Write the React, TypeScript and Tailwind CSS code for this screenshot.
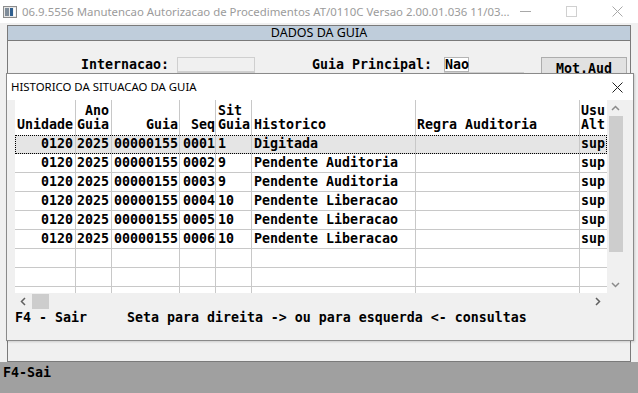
import React from 'react';

const mono = { fontFamily: '"DejaVu Sans Mono", "Liberation Mono", monospace' };
const ui = { fontFamily: '"Noto Sans", "Open Sans", Arial, sans-serif' };

interface Row {
  unidade: string;
  ano: string;
  guia: string;
  seq: string;
  sit: string;
  historico: string;
  regra: string;
  usu: string;
}

const rows: Row[] = [
  { unidade: '0120', ano: '2025', guia: '00000155', seq: '0001', sit: '1', historico: 'Digitada', regra: '', usu: 'sup' },
  { unidade: '0120', ano: '2025', guia: '00000155', seq: '0002', sit: '9', historico: 'Pendente Auditoria', regra: '', usu: 'sup' },
  { unidade: '0120', ano: '2025', guia: '00000155', seq: '0003', sit: '9', historico: 'Pendente Auditoria', regra: '', usu: 'sup' },
  { unidade: '0120', ano: '2025', guia: '00000155', seq: '0004', sit: '10', historico: 'Pendente Liberacao', regra: '', usu: 'sup' },
  { unidade: '0120', ano: '2025', guia: '00000155', seq: '0005', sit: '10', historico: 'Pendente Liberacao', regra: '', usu: 'sup' },
  { unidade: '0120', ano: '2025', guia: '00000155', seq: '0006', sit: '10', historico: 'Pendente Liberacao', regra: '', usu: 'sup' },
];

// column cells: width includes the 1px right grid line
const cell = 'h-full flex items-center border-r border-[#c8c8c8] shrink-0 whitespace-pre';

function GridRow({ r, selected }: { r?: Row; selected?: boolean }) {
  return (
    <div
      className={`flex h-[19px] border-b border-[#c8c8c8] ${
        selected ? 'bg-[#e5e5e5] outline-1 outline-dotted outline-black -outline-offset-1' : ''
      }`}
    >
      <div className={`${cell} w-[61px] justify-end pr-[2px]`}>{r?.unidade}</div>
      <div className={`${cell} w-[36px] justify-end pr-[2px]`}>{r?.ano}</div>
      <div className={`${cell} w-[68px] justify-end pr-[1px]`}>{r?.guia}</div>
      <div className={`${cell} w-[36px] justify-end`}>{r?.seq}</div>
      <div className={`${cell} w-[36px] pl-[2px]`}>{r?.sit}</div>
      <div className={`${cell} w-[164px] pl-[2px]`}>{r?.historico}</div>
      <div className={`${cell} w-[164px] pl-[1px]`}>{r?.regra}</div>
      <div className={`${cell} w-[40px] pl-[1px]`}>{r?.usu}</div>
    </div>
  );
}

export default function App() {
  return (
    <div className="w-[638px] h-[393px] relative overflow-hidden bg-[#f0f0f0] flex flex-col text-black">
      {/* Window title bar (inactive) */}
      <div className="h-[23px] bg-white flex items-center shrink-0" style={ui}>
        <svg width="14" height="12" viewBox="0 0 14 12" className="ml-[3px] shrink-0">
          <rect x="0.5" y="0.5" width="13" height="11" fill="#e6e6e6" stroke="#8c8c8c" />
          <rect x="2" y="2" width="4" height="8" fill="#7f8c99" />
          <rect x="7" y="2" width="3" height="8" fill="#2f5f8f" />
          <rect x="10.5" y="2" width="2" height="8" fill="#ffffff" />
        </svg>
        <span className="ml-[5px] text-[11.4px] text-[#9b9b9b] whitespace-nowrap">
          06.9.5556 Manutencao Autorizacao de Procedimentos AT/0110C Versao 2.00.01.036 11/03...
        </span>
        <div className="ml-auto flex items-center text-[#a8a8a8] shrink-0">
          <svg width="11" height="11" viewBox="0 0 11 11" className="mr-[35px]">
            <line x1="0" y1="5.5" x2="11" y2="5.5" stroke="currentColor" />
          </svg>
          <svg width="11" height="11" viewBox="0 0 11 11" className="mr-[35px]">
            <rect x="0.5" y="0.5" width="10" height="10" fill="none" stroke="#d0d0d0" />
          </svg>
          <svg width="11" height="11" viewBox="0 0 11 11" className="mr-[15px]">
            <path d="M0.5 0.5 L10.5 10.5 M10.5 0.5 L0.5 10.5" stroke="currentColor" />
          </svg>
        </div>
      </div>

      {/* Main form */}
      <div className="flex-1 pt-[2px] pl-[7px]">
        <div className="w-[624px] h-full border border-[#7a7a7a] flex flex-col" style={mono}>
          <div
            className="h-[15px] bg-[#bfcddb] border-b border-[#7a7a7a] flex items-center justify-center text-[12.5px] leading-none"
            style={ui}
          >
            DADOS DA GUIA
          </div>

          <div className="pt-[16px] text-[13.29px] font-bold leading-none">
            <div className="flex items-start h-[15px]">
              <div className="w-[161px] h-[15px] flex items-center justify-end whitespace-pre">Internacao:</div>
              <div className="ml-[8px] w-[78px] h-[15px] border border-[#cfcfcf] bg-[#f0f0f0]" />
              <div className="ml-[57px] w-[124px] h-[15px] flex items-center whitespace-pre">Guia Principal:</div>
              <div className="ml-[8px] w-[25px] h-[15px] border border-[#b4b4b4] bg-white flex items-center">Nao</div>
              <div className="ml-[72px] w-[86px] h-[23px] border border-[#adadad] bg-[#e1e1e1] flex items-center justify-center">
                <span className="underline underline-offset-2">M</span>ot.Aud
              </div>
            </div>
            {/* second row of fields, hidden behind the dialog */}
            <div className="flex items-start h-[2px] overflow-hidden">
              <div className="ml-[169px] w-[78px] h-[15px] border border-[#cfcfcf] bg-white" />
              <div className="ml-[189px] w-[80px] h-[15px] border border-[#cfcfcf] bg-white" />
            </div>
          </div>
        </div>
      </div>

      {/* Status bar */}
      <div className="h-[31px] bg-[#a0a0a0] shrink-0 pl-[3px] pt-[3px] text-[13.29px] font-bold leading-[15px]" style={mono}>
        F4-Sai
      </div>

      {/* Modal dialog over the form */}
      <div className="absolute left-[6px] top-[73px] w-[628px] h-[268px] border border-[#8a8a8a] bg-[#f0f0f0] flex flex-col shadow-[1px_1px_2px_rgba(0,0,0,0.15)]">
        <div className="h-[26px] bg-white flex items-center pl-[4px] pr-[10px] shrink-0" style={ui}>
          <span className="text-[11.4px]">HISTORICO DA SITUACAO DA GUIA</span>
          <svg width="11" height="11" viewBox="0 0 11 11" className="ml-auto">
            <path d="M0.5 0.5 L10.5 10.5 M10.5 0.5 L0.5 10.5" stroke="#222" />
          </svg>
        </div>

        <div className="pl-[8px] text-[13.29px] font-bold leading-none" style={mono}>
          <div className="flex">
            {/* Grid */}
            <div className="w-[592px] h-[193px] bg-white overflow-hidden">
              <div className="flex h-[35px] leading-[14px]">
                <div className={`${cell} w-[61px] justify-end items-end pr-[2px] pb-[3px]`}>Unidade</div>
                <div className={`${cell} w-[36px] justify-end items-end pr-[2px] pb-[3px] text-right`}>{'Ano\nGuia'}</div>
                <div className={`${cell} w-[68px] justify-end items-end pr-[1px] pb-[3px]`}>Guia</div>
                <div className={`${cell} w-[36px] justify-end items-end pb-[3px]`}>Seq</div>
                <div className={`${cell} w-[36px] items-end pl-[2px] pb-[3px]`}>{'Sit\nGuia'}</div>
                <div className={`${cell} w-[164px] items-end pl-[2px] pb-[3px]`}>Historico</div>
                <div className={`${cell} w-[164px] items-end pl-[1px] pb-[3px]`}>Regra Auditoria</div>
                <div className={`${cell} w-[40px] items-end pl-[1px] pb-[3px]`}>{'Usu\nAlt'}</div>
              </div>
              {rows.map((r, i) => (
                <GridRow key={i} r={r} selected={i === 0} />
              ))}
              <GridRow />
              <GridRow />
              <GridRow />
            </div>

            {/* Vertical scrollbar */}
            <div className="w-[17px] h-[193px] flex flex-col items-center">
              <svg width="9" height="6" viewBox="0 0 9 6" className="mt-[5px]">
                <path d="M1 5 L4.5 1.5 L8 5" stroke="#8a8a8a" strokeWidth="1.5" fill="none" />
              </svg>
              <div className="mt-[5px] w-[14px] h-[136px] bg-[#cdcdcd]" />
              <div className="flex-1" />
              <svg width="9" height="6" viewBox="0 0 9 6" className="mb-[5px]">
                <path d="M1 1 L4.5 4.5 L8 1" stroke="#8a8a8a" strokeWidth="1.5" fill="none" />
              </svg>
            </div>
          </div>

          {/* Horizontal scrollbar */}
          <div className="w-[592px] h-[16px] flex items-center">
            <svg width="6" height="9" viewBox="0 0 6 9" className="ml-[5px]">
              <path d="M5 1 L1.5 4.5 L5 8" stroke="#606060" strokeWidth="1.5" fill="none" />
            </svg>
            <div className="ml-[6px] w-[17px] h-[15px] bg-[#cdcdcd]" />
            <div className="flex-1" />
            <svg width="6" height="9" viewBox="0 0 6 9" className="mr-[6px]">
              <path d="M1 1 L4.5 4.5 L1 8" stroke="#606060" strokeWidth="1.5" fill="none" />
            </svg>
          </div>

          <div className="h-[18px] flex items-center whitespace-pre">
            F4 - Sair     Seta para direita -&gt; ou para esquerda &lt;- consultas
          </div>
        </div>
      </div>
    </div>
  );
}
